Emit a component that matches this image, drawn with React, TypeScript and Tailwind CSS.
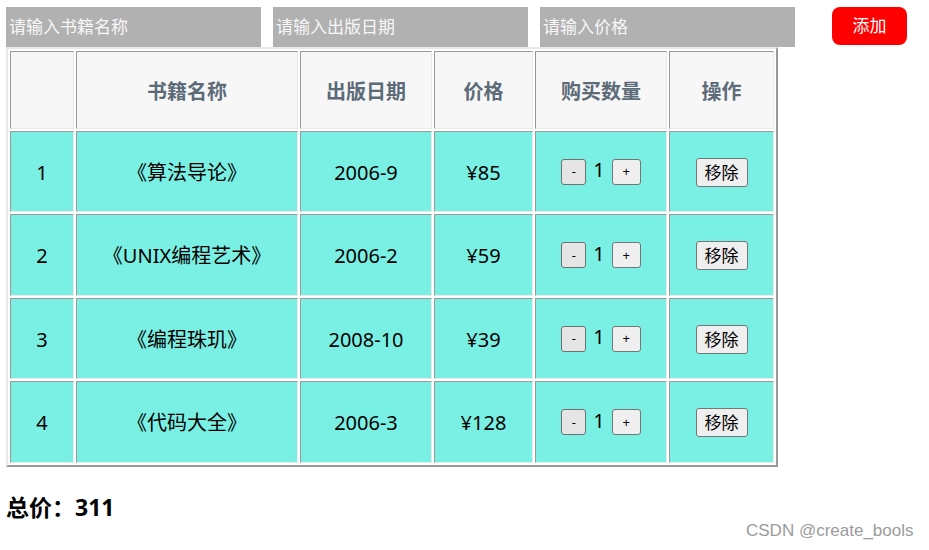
import { useState } from 'react'

interface Book {
  id: number
  name: string
  date: string
  price: number
  count: number
}

const initialBooks: Book[] = [
  { id: 1, name: '《算法导论》', date: '2006-9', price: 85, count: 1 },
  { id: 2, name: '《UNIX编程艺术》', date: '2006-2', price: 59, count: 1 },
  { id: 3, name: '《编程珠玑》', date: '2008-10', price: 39, count: 1 },
  { id: 4, name: '《代码大全》', date: '2006-3', price: 128, count: 1 },
]

const rowHeights = ['h-[81px]', 'h-[82px]', 'h-[81px]', 'h-[82px]']

const cell =
  'border border-t-[#999] border-l-[#999] border-b-[#eaeaea] border-r-[#eaeaea] text-center align-middle'

export default function App() {
  const [books, setBooks] = useState<Book[]>(initialBooks)

  const total = books.reduce((sum, b) => sum + b.price * b.count, 0)

  const changeCount = (id: number, delta: number) => {
    setBooks(bs => bs.map(b => (b.id === id ? { ...b, count: Math.max(1, b.count + delta) } : b)))
  }

  const remove = (id: number) => {
    setBooks(bs => bs.filter(b => b.id !== id))
  }

  return (
    <div className="relative min-h-[550px] bg-white pl-[6px] pt-[7px] font-['Noto_Sans','Noto_Sans_CJK_SC',sans-serif] text-black">
      <div className="flex items-start">
        <input
          placeholder="请输入书籍名称"
          className="h-[40px] w-[255px] bg-[#b1b1b1] pb-[2px] pl-[3px] text-[17px] text-white outline-none placeholder:text-[#f7f7f7]"
        />
        <input
          placeholder="请输入出版日期"
          className="ml-[12px] h-[40px] w-[255px] bg-[#b1b1b1] pb-[2px] pl-[3px] text-[17px] text-white outline-none placeholder:text-[#f7f7f7]"
        />
        <input
          placeholder="请输入价格"
          className="ml-[12px] h-[40px] w-[255px] bg-[#b1b1b1] pb-[2px] pl-[3px] text-[17px] text-white outline-none placeholder:text-[#f7f7f7]"
        />
        <button className="ml-[37px] h-[38px] w-[75px] rounded-[8px] bg-[#ff0000] text-[17px] text-white">
          添加
        </button>
      </div>

      <table className="w-[772px] table-fixed border-separate border-spacing-[2px] border-2 border-t-[#e8e8e8] border-l-[#e8e8e8] border-b-[#9a9a9a] border-r-[#9a9a9a] text-[20px]">
        <thead>
          <tr className="h-[78px] bg-[#f7f7f7] font-bold text-[#5c6b77]">
            <th className={`${cell} w-[64px] pt-[3px]`}></th>
            <th className={`${cell} w-[222px] pt-[3px]`}>书籍名称</th>
            <th className={`${cell} w-[132px] pt-[3px]`}>出版日期</th>
            <th className={`${cell} w-[99px] pt-[3px]`}>价格</th>
            <th className={`${cell} w-[132px] pt-[3px]`}>购买数量</th>
            <th className={`${cell} w-[105px] pt-[3px]`}>操作</th>
          </tr>
        </thead>
        <tbody>
          {books.map((b, i) => (
            <tr key={b.id} className={`${rowHeights[i % 4]} bg-[#7af0e4]`}>
              <td className={`${cell} pt-[2px]`}>{b.id}</td>
              <td className={`${cell} pt-[2px]`}>{b.name}</td>
              <td className={`${cell} pt-[2px]`}>{b.date}</td>
              <td className={`${cell} pt-[2px]`}>¥{b.price}</td>
              <td className={cell}>
                <div className="flex items-center justify-center">
                  <button
                    onClick={() => changeCount(b.id, -1)}
                    className="h-[26px] w-[25px] rounded-[3px] border border-[#6f6f6f] bg-[#e5e5e5] text-[13px] leading-none"
                  >
                    -
                  </button>
                  <span className="mx-[7px] -mt-[3px] leading-none">{b.count}</span>
                  <button
                    onClick={() => changeCount(b.id, 1)}
                    className="h-[26px] w-[29px] rounded-[3px] border border-[#767676] bg-[#efefef] text-[13px] leading-none"
                  >
                    +
                  </button>
                </div>
              </td>
              <td className={cell}>
                <button
                  onClick={() => remove(b.id)}
                  className="h-[29px] w-[52px] rounded-[3px] border border-[#767676] bg-[#efefef] text-[17px] leading-none"
                >
                  移除
                </button>
              </td>
            </tr>
          ))}
        </tbody>
      </table>

      <div className="mt-[25px] text-[23px] font-bold leading-[30px]">总价：{total}</div>

      <div className="absolute left-[746px] top-[521px] font-['Liberation_Sans',sans-serif] text-[17px] leading-[20px] text-[#9b9b9b]">
        CSDN @create_bools
      </div>
    </div>
  )
}
